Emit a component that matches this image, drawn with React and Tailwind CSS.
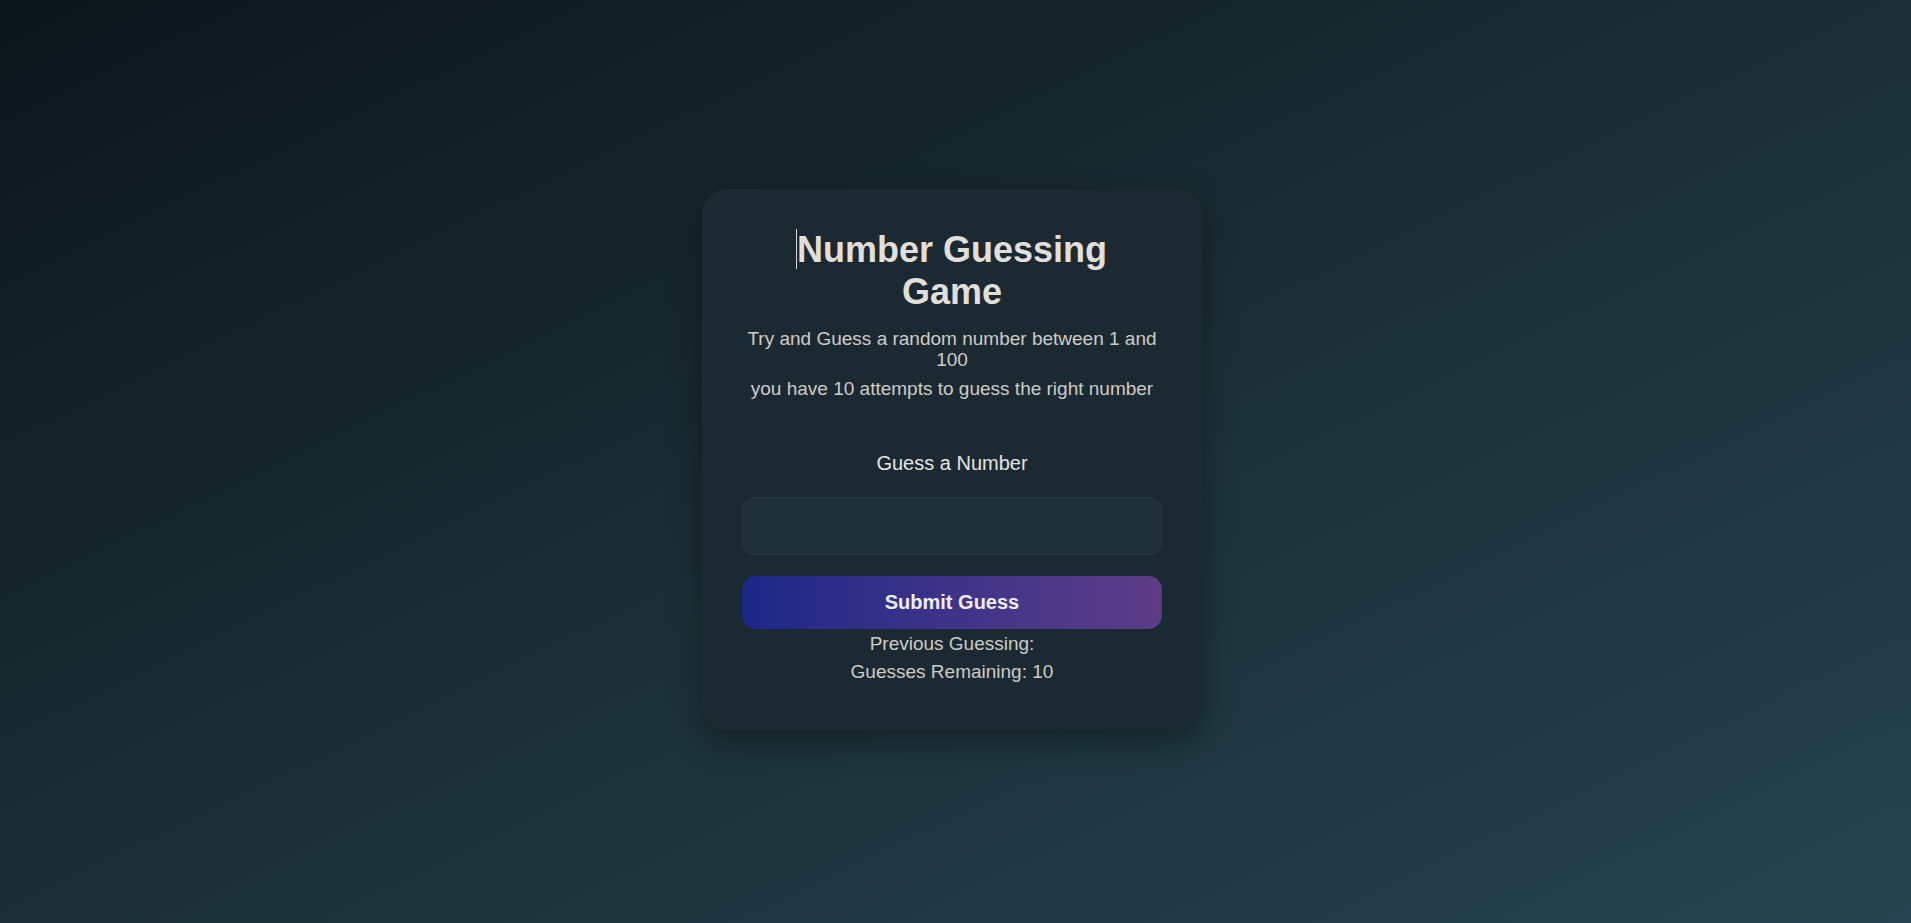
import { useState } from 'react';

const App = () => {
  const [guess, setGuess] = useState('');
  const [previous, setPrevious] = useState([]);
  const remaining = 10 - previous.length;

  const handleSubmit = () => {
    if (!guess || remaining <= 0) return;
    setPrevious([...previous, guess]);
    setGuess('');
  };

  return (
    <div
      className="flex min-h-screen items-center justify-center bg-linear-to-br from-[#0b161b] via-[#1b2e37] to-[#25444f] pr-[7px] pb-[4px] text-center"
      style={{ fontFamily: '"Liberation Sans", Arial, sans-serif' }}
    >
      <div className="w-[500px] rounded-[25px] bg-[#1b2a32] px-10 pt-10 pb-[48px] shadow-[0_12px_32px_rgba(0,0,0,0.35)]">
        <h1 className="text-[36px] leading-[1.15] font-bold text-[#e2dfda]">
          <span className="relative">
            <span className="absolute top-0 left-[-1px] h-[40px] w-px bg-[#d8d6d2]" />
            Number Guessing Game
          </span>
        </h1>
        <p className="mt-[16px] text-[19px] leading-[21px] text-[#cfcbc6]">
          Try and Guess a random number between 1 and 100
        </p>
        <p className="mt-[8px] text-[19px] leading-[21px] text-[#cfcbc6]">
          you have 10 attempts to guess the right number
        </p>

        <label htmlFor="guess" className="mt-[53px] block text-[20px] leading-[23px] text-[#e6e4e1]">
          Guess a Number
        </label>
        <input
          id="guess"
          type="number"
          value={guess}
          onChange={(e) => setGuess(e.target.value)}
          className="mt-[22px] block h-[58px] w-full rounded-[12px] border border-[#24363f] bg-[#1f3038] px-4 text-[19px] text-[#e6e4e1] outline-none"
        />
        <button
          onClick={handleSubmit}
          className="mt-[21px] block h-[53px] w-full rounded-[14px] bg-linear-to-r from-[#1c2788] to-[#5e3c88] text-[20px] font-bold text-[#eeedf3]"
        >
          Submit Guess
        </button>
        <p className="mt-[4px] text-[19px] leading-[21px] text-[#cfcbc6]">
          Previous Guessing: {previous.join(', ')}
        </p>
        <p className="mt-[7px] text-[19px] leading-[21px] text-[#cfcbc6]">
          Guesses Remaining: {remaining}
        </p>
      </div>
    </div>
  );
};

export default App;
